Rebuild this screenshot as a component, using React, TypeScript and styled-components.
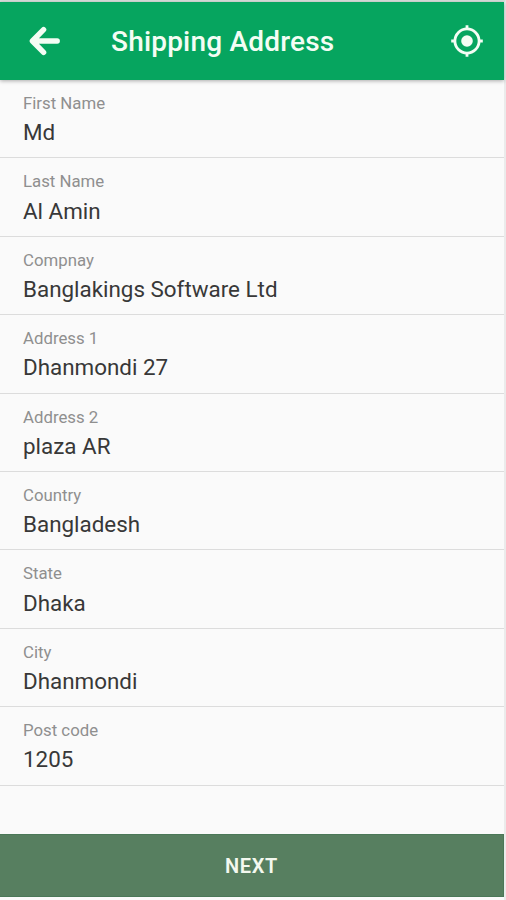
import React from "react";
import styled, { createGlobalStyle } from "styled-components";

const GlobalStyle = createGlobalStyle`
  * { box-sizing: border-box; }
  body { margin: 0; background: #fafafa; font-family: Roboto, sans-serif; }
`;

const Screen = styled.div`
  width: 506px;
  height: 900px;
  border-top: 2px solid #d9dfdc;
  border-right: 2px solid #ebebeb;
  display: flex;
  flex-direction: column;
  background: #fafafa;
`;

const Header = styled.header`
  height: 78px;
  flex: none;
  display: flex;
  align-items: center;
  padding: 0 20px 0 28px;
  background: #06a55f;
  color: #f4fdf4;
  box-shadow: 0 1px 4px rgba(0, 0, 0, 0.32);
`;

const Title = styled.h1`
  flex: 1;
  margin: 2px 0 0 50px;
  font-size: 28px;
  line-height: 34px;
  font-weight: 500;
  letter-spacing: 0.2px;
  white-space: nowrap;
`;

const IconButton = styled.button`
  display: flex;
  padding: 0;
  border: 0;
  background: none;
  color: inherit;
`;

const Form = styled.main`
  flex: 1;
`;

const Field = styled.div`
  height: 78.4px;
  padding: 13px 23px 0;
  border-bottom: 1px solid #dcdcdc;
`;

const Label = styled.div`
  font-size: 16.8px;
  line-height: 20px;
  color: #8f8f8f;
`;

const Value = styled.div`
  margin-top: 5.2px;
  font-size: 22.4px;
  line-height: 28px;
  font-weight: 400;
  color: #383838;
`;

const NextButton = styled.button`
  height: 63px;
  flex: none;
  margin-bottom: 3px;
  border: 1px solid #4b7858;
  border-left: 0;
  padding: 0;
  background: #577f60;
  color: #f3f8ef;
  font: 600 20px/24px Roboto, sans-serif;
  letter-spacing: 0.6px;
`;

const fields = [
  ["First Name", "Md"],
  ["Last Name", "Al Amin"],
  ["Compnay", "Banglakings Software Ltd"],
  ["Address 1", "Dhanmondi 27"],
  ["Address 2", "plaza AR"],
  ["Country", "Bangladesh"],
  ["State", "Dhaka"],
  ["City", "Dhanmondi"],
  ["Post code", "1205"],
];

export default function App() {
  return (
    <>
      <GlobalStyle />
      <Screen>
        <Header>
          <IconButton aria-label="Back">
            <svg width="33" height="30" viewBox="0 0 33 30" fill="none" stroke="currentColor" strokeWidth="5.4" strokeLinecap="round" strokeLinejoin="round">
              <path d="M15.6 3.6 L4.4 15 L15.6 26.4 M4.6 15 H29.2" />
            </svg>
          </IconButton>
          <Title>Shipping Address</Title>
          <IconButton aria-label="Use current location">
            <svg width="34" height="34" viewBox="0 0 34 34" fill="none" stroke="currentColor" strokeWidth="2.8">
              <circle cx="17" cy="17" r="12.1" />
              <path d="M17 1.2v4M17 28.8v4M1.2 17h4M28.8 17h4" />
              <circle cx="17" cy="17" r="5.8" fill="currentColor" stroke="none" />
            </svg>
          </IconButton>
        </Header>
        <Form>
          {fields.map(([label, value]) => (
            <Field key={label}>
              <Label>{label}</Label>
              <Value>{value}</Value>
            </Field>
          ))}
        </Form>
        <NextButton>NEXT</NextButton>
      </Screen>
    </>
  );
}
